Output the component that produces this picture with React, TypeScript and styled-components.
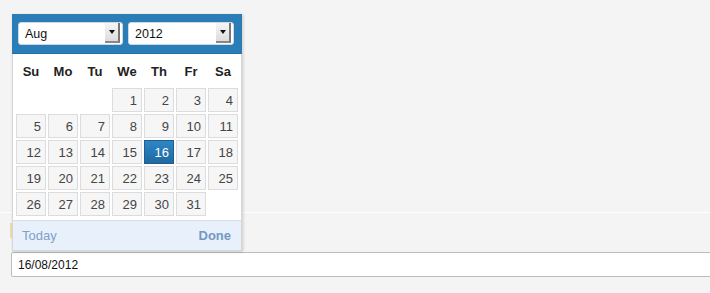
import React from 'react';
import styled, { createGlobalStyle } from 'styled-components';

const GlobalStyle = createGlobalStyle`
  html, body {
    margin: 0;
    padding: 0;
    background: #f4f4f4;
    font-family: "Liberation Sans", Arial, sans-serif;
  }
`;

const Page = styled.div`
  position: relative;
  width: 710px;
  height: 293px;
  overflow: hidden;
  background: #f4f4f4;
`;

const TopSection = styled.div`
  height: 212px;
  border-bottom: 1px solid #ffffff;
`;

const FormArea = styled.div`
  padding: 10px 0 0 10px;
  display: flex;
  flex-direction: column;
  gap: 14px;
`;

const Hint = styled.div`
  height: 15px;
  border-left: 2px solid #f5dca4;
`;

const DateInput = styled.input`
  box-sizing: border-box;
  margin-left: 1px;
  width: 720px;
  height: 25px;
  padding: 0 6px;
  border: 1px solid #bcbcbc;
  border-radius: 2px;
  background: #fff;
  font-family: "Liberation Sans", Arial, sans-serif;
  font-size: 12px;
  color: #111;
  outline: none;
`;

const Picker = styled.div`
  position: absolute;
  left: 12px;
  top: 14px;
  width: 230px;
  box-sizing: border-box;
  background: #fff;
  border: 1px solid #d6d6d6;
  border-top: none;
  box-shadow: 1px 1px 3px rgba(0, 0, 0, 0.18);
`;

const Header = styled.div`
  display: flex;
  gap: 5px;
  height: 40px;
  box-sizing: border-box;
  padding: 8px 6px 0 6px;
  margin: 0 -1px;
  background: #2a7db7;
  border-bottom: 1px solid #2370a6;
`;

const Select = styled.div<{ $w: number }>`
  position: relative;
  box-sizing: border-box;
  width: ${(p) => p.$w}px;
  height: 23px;
  background: #fff;
  border-radius: 3px;
  border: 1px solid #c9d8e4;
  display: flex;
  align-items: center;
  padding-left: 6px;
  font-size: 12.5px;
  color: #111;
`;

const SelectButton = styled.div`
  position: absolute;
  right: 2px;
  top: 0;
  width: 15px;
  height: 20px;
  box-sizing: border-box;
  background: linear-gradient(#f6f6f6, #dcdcdc);
  border-right: 2px solid #777;
  border-bottom: 2px solid #888;
  display: flex;
  align-items: center;
  justify-content: center;
`;

const Arrow = styled.span`
  width: 0;
  height: 0;
  border-left: 3px solid transparent;
  border-right: 3px solid transparent;
  border-top: 4px solid #111;
`;

const Body = styled.div`
  padding: 0 3px 4px 3px;
`;

const WeekRow = styled.div`
  display: grid;
  grid-template-columns: repeat(7, 30px);
  column-gap: 2px;
  height: 34px;
  align-items: center;
`;

const WeekDay = styled.div`
  text-align: center;
  font-weight: bold;
  font-size: 13px;
  color: #222;
  padding-top: 1px;
`;

const Grid = styled.div`
  display: grid;
  grid-template-columns: repeat(7, 30px);
  grid-auto-rows: 24px;
  gap: 2px;
`;

const Day = styled.div<{ $active?: boolean; $empty?: boolean }>`
  box-sizing: border-box;
  display: flex;
  align-items: center;
  justify-content: flex-end;
  padding-right: 4px;
  font-size: 13px;
  visibility: ${(p) => (p.$empty ? 'hidden' : 'visible')};
  color: ${(p) => (p.$active ? '#fff' : '#454545')};
  background: ${(p) =>
    p.$active ? 'linear-gradient(#2f86c4, #1f6aa2)' : '#f6f6f6'};
  border: 1px solid ${(p) => (p.$active ? '#1d5f8f' : '#dcdcdc')};
`;

const Footer = styled.div`
  height: 30px;
  box-sizing: border-box;
  margin: 0 -1px;
  padding: 0 10px 0 9px;
  display: flex;
  align-items: center;
  justify-content: space-between;
  background: #e8f1fb;
  border-top: 1px solid #d8dee6;
  border-left: 1px solid #d6d6d6;
  border-right: 1px solid #d6d6d6;
  font-size: 13px;
`;

const FooterLink = styled.span<{ $bold?: boolean }>`
  color: ${(p) => (p.$bold ? '#7398c4' : '#7f9fc6')};
  font-weight: ${(p) => (p.$bold ? 'bold' : 'normal')};
`;

const weekDays = ['Su', 'Mo', 'Tu', 'We', 'Th', 'Fr', 'Sa'];

const cells: (number | null)[] = [
  null, null, null,
  ...Array.from({ length: 31 }, (_, i) => i + 1),
  null,
];

const App = () => {
  return (
    <Page>
      <GlobalStyle />
      <TopSection />
      <FormArea>
        <Hint />
        <DateInput defaultValue="16/08/2012" />
      </FormArea>
      <Picker>
        <Header>
          <Select $w={105}>
            Aug
            <SelectButton>
              <Arrow />
            </SelectButton>
          </Select>
          <Select $w={106}>
            2012
            <SelectButton>
              <Arrow />
            </SelectButton>
          </Select>
        </Header>
        <Body>
          <WeekRow>
            {weekDays.map((d) => (
              <WeekDay key={d}>{d}</WeekDay>
            ))}
          </WeekRow>
          <Grid>
            {cells.map((n, i) => (
              <Day key={i} $empty={n === null} $active={n === 16}>
                {n}
              </Day>
            ))}
          </Grid>
        </Body>
        <Footer>
          <FooterLink>Today</FooterLink>
          <FooterLink $bold>Done</FooterLink>
        </Footer>
      </Picker>
    </Page>
  );
};

export default App;
